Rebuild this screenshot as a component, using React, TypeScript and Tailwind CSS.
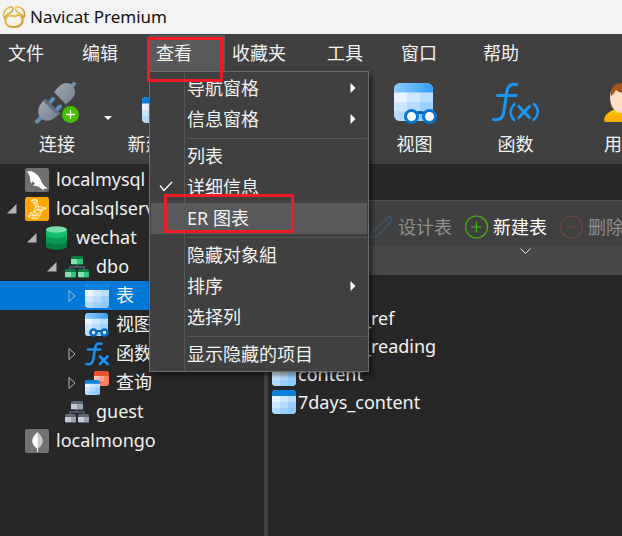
import React, { useState } from "react";

type IconName =
  | "mysql"
  | "sqlserver"
  | "database"
  | "schema"
  | "schemaOff"
  | "table"
  | "view"
  | "func"
  | "query"
  | "mongo";

interface TreeNode {
  label: string;
  level: number;
  icon: IconName;
  state?: "open" | "closed";
}

const treeNodes: TreeNode[] = [
  { label: "localmysql", level: 0, icon: "mysql" },
  { label: "localsqlserver", level: 0, icon: "sqlserver", state: "open" },
  { label: "wechat", level: 1, icon: "database", state: "open" },
  { label: "dbo", level: 2, icon: "schema", state: "open" },
  { label: "表", level: 3, icon: "table", state: "closed" },
  { label: "视图", level: 3, icon: "view" },
  { label: "函数", level: 3, icon: "func", state: "closed" },
  { label: "查询", level: 3, icon: "query", state: "closed" },
  { label: "guest", level: 2, icon: "schemaOff" },
  { label: "localmongo", level: 0, icon: "mongo" },
];

const indents = ["pl-0", "pl-5", "pl-10", "pl-15"];

const tables = ["users", "content_ref", "content_reading", "content", "7days_content"];

/* ---------- Icons ---------- */

function AppLogo() {
  return (
    <svg className="w-6 h-6" viewBox="0 0 24 24" fill="none" strokeLinejoin="round">
      <defs>
        <linearGradient id="gold" x1="0" y1="0" x2="1" y2="1">
          <stop offset="0" stopColor="#f0cc58" />
          <stop offset="1" stopColor="#c8952f" />
        </linearGradient>
      </defs>
      <path
        d="M3.500 16.500C3.500 12.500 6 10.500 8.800 10.500C10.500 10.500 11.500 11.500 12.500 11.500C13.500 11.500 14 10 16 10C19 10 21 12.500 20.500 16C20 20 16.500 22 12 22C7 22 3.500 20 3.500 16.500Z"
        stroke="url(#gold)"
        strokeWidth="2.200"
      />
      <path
        d="M2.500 13.500C0.500 10 2 3.500 8.500 2C11 1.800 11.300 3.500 10.500 5.500C9.500 8 4 8.500 2.500 13.500Z"
        stroke="url(#gold)"
        strokeWidth="1.700"
      />
      <path
        d="M21.800 12.500C23.800 9 22 3 16.500 2C13.500 1.600 13 3.500 14 5.500C15.300 8 19.500 8 21.800 12.500Z"
        stroke="url(#gold)"
        strokeWidth="1.700"
      />
    </svg>
  );
}

function ConnectIcon() {
  return (
    <svg className="w-11 h-[42px]" viewBox="0 0 44 42">
      <defs>
        <linearGradient id="plug" x1="0" y1="0" x2="1" y2="1">
          <stop offset="0" stopColor="#a3abb6" />
          <stop offset="1" stopColor="#727d8c" />
        </linearGradient>
      </defs>
      <g stroke="#5d91b8" strokeWidth="4" strokeLinecap="round">
        <path d="M35 6L39 2" />
        <path d="M2 39.500L7 34.500" />
        <path d="M14 21.500L18 17" />
        <path d="M21 28.500L25 24.500" />
      </g>
      <path d="M19 10C24 4 27 1 32 1C37 1.500 40.500 6 40 11C39.500 16 35 18.500 31 22.500Z" fill="url(#plug)" />
      <path d="M9 18C4 23 2 28 4 33C7 39 13 40 17 37.500C20 36 22 34 24 32Z" fill="url(#plug)" />
      <path d="M8 19L10.500 16.500L25.500 31.500L23 33.500Z" fill="#65707f" />
      <circle cx="35.500" cy="32.500" r="8.500" fill="#45bf00" />
      <path d="M35.500 28V37M31 32.500H40" stroke="#fff" strokeWidth="1.300" />
    </svg>
  );
}

// Grid of pale cells under a coloured heading strip
function TableShape({ head = "#0a7fdc", head2 = "#0a7fdc" }: { head?: string; head2?: string }) {
  const id = "h" + head.slice(1);
  return (
    <>
      <defs>
        <linearGradient id={id}>
          <stop offset="0" stopColor={head} />
          <stop offset="1" stopColor={head2} />
        </linearGradient>
        <clipPath id="cell">
          <rect width="24" height="24" rx="4" />
        </clipPath>
      </defs>
      <g clipPath="url(#cell)">
        <rect width="24" height="24" fill="#a9d8ff" />
        <rect width="24" height="7" fill={`url(#${id})`} />
        <rect y="6" width="8" height="6" fill="#e8f4ff" />
        <rect x="8" y="6" width="8" height="6" fill="#cde8ff" />
        <rect x="16" y="6" width="8" height="6" fill="#b9deff" />
        <rect y="12" width="8" height="6" fill="#cbe6ff" />
        <rect x="8" y="12" width="8" height="6" fill="#b7dcff" />
        <rect x="16" y="12" width="8" height="6" fill="#99d0ff" />
        <rect y="18" width="8" height="6" fill="#b2dbff" />
        <rect x="8" y="18" width="8" height="6" fill="#9bd0ff" />
        <rect x="16" y="18" width="8" height="6" fill="#8bc9ff" />
      </g>
    </>
  );
}

function ViewIcon() {
  return (
    <svg className="w-11 h-[42px]" viewBox="0 0 44 42">
      <svg x="1" y="1" width="39" height="38" viewBox="0 0 24 24" preserveAspectRatio="none">
        <TableShape head="#8fcbff" head2="#369df5" />
      </svg>
      <path d="M20 32Q27 29 34 32" stroke="#0d5fae" strokeWidth="3" fill="none" />
      <circle cx="18.500" cy="34.500" r="6" fill="#fff" stroke="#0a75cf" strokeWidth="3" />
      <circle cx="36.500" cy="34.500" r="6" fill="#fff" stroke="#0a75cf" strokeWidth="3" />
    </svg>
  );
}

function FunctionIcon() {
  return (
    <svg className="w-12 h-[42px]" viewBox="0 0 48 42" fill="none" stroke="#1b96f5" strokeWidth="3" strokeLinecap="round">
      <path d="M24.500 2.500C17 1.500 15.500 5 14.500 12L12 29C11 36 8.500 38.500 1.500 37.500" />
      <path d="M5.500 13.500H24" />
      <path d="M22.500 22C17.500 27 17.500 33 22 38" strokeWidth="2.400" />
      <path d="M42 22C47.500 27 47 33 41.500 38" strokeWidth="2.400" />
      <path d="M27 24.500L37.500 35.500M37.500 24.500L27 35.500" />
    </svg>
  );
}

function QueryLargeIcon() {
  return (
    <svg className="w-11 h-[42px]" viewBox="0 0 44 42">
      <rect x="17" y="1" width="26" height="25" rx="4" fill="#f4633f" />
      <svg x="0" y="15" width="26" height="26" viewBox="0 0 24 24">
        <TableShape />
      </svg>
    </svg>
  );
}

function TableLargeIcon() {
  return (
    <svg className="w-[42px] h-[42px]" viewBox="0 0 24 24">
      <TableShape />
    </svg>
  );
}

function UserIcon() {
  return (
    <svg className="w-9 h-[42px]" viewBox="0 0 36 42">
      <defs>
        <linearGradient id="shirt" x1="0" y1="0" x2="0" y2="1">
          <stop offset="0" stopColor="#ffc900" />
          <stop offset="1" stopColor="#f7a800" />
        </linearGradient>
      </defs>
      <path d="M0 38C1 31 7 29 12 27L24 27C30 29 35 31 36 38Q36 40 34 40H2Q0 40 0 38Z" fill="url(#shirt)" />
      <path d="M6 15C6 7 11 3 18 3S30 7 30 15C30 25 25 31 18 31S6 25 6 15Z" fill="#ffe1c8" />
      <path d="M7 14C6 5 11 1 18 1S30 5 29 14L27 11Q18 13 12 8Q10 12 7 14Z" fill="#a5561f" />
    </svg>
  );
}

function TreeIcon({ name }: { name: IconName }) {
  const cls = "w-6 h-6 shrink-0";
  switch (name) {
    case "mysql":
      return (
        <svg className={cls} viewBox="0 0 24 24">
          <rect width="24" height="24" rx="2" fill="#6f6f6f" />
          <path d="M2 3.500C5 2 8 3.500 10.500 5.500C13.500 7 15.500 11 16.500 14C18 17 20.500 18.500 22.500 21L18.500 20.500L18.500 23C16.500 20 14 19 11.500 18L8 17.500L10 15.500C8 13.500 7.500 12 6.500 15.500C4.500 13 5.500 10 4.500 8C3.500 6 3 5 2 3.500Z" fill="#fff" />
        </svg>
      );
    case "sqlserver":
      return (
        <svg className={cls} viewBox="0 0 24 24">
          <rect width="24" height="24" rx="2" fill="#ffa500" />
          <g fill="none" stroke="#fff2d2" strokeWidth="0.900" strokeLinejoin="round">
            <path d="M6 3.500L11 2L12.500 4L12 7L14 9.500L21.500 11L17 13.500L14.500 19L12 22L7 21.500L3 19L5 16L9 14.500L10.500 10L8.500 6Z" />
            <path d="M6 3.500L12.500 4L8.500 6L12 7L10.500 10L14 9.500L13 13L21.500 11M10.500 10L13 13L17 13.500L12.500 17L9 14.500L13 13M12.500 17L14.500 19L9 18.500L12 22M9 14.500L9 18.500L5 16M9 18.500L3 19M9 18.500L7 21.500M12.500 17L9 18.500" />
          </g>
        </svg>
      );
    case "database":
      return (
        <svg className={cls} viewBox="0 0 24 24">
          <path d="M1 4V20C1 25 22 25 22 20V4Z" fill="#067f43" />
          <path d="M1 4V15C1 19 22 19 22 15V4Z" fill="#0a9c54" />
          <path d="M1 4V9C1 13 22 13 22 9V4Z" fill="#12bd6b" />
          <ellipse cx="11.500" cy="3.500" rx="10.500" ry="3.200" fill="#78dfa8" />
        </svg>
      );
    case "schema":
    case "schemaOff": {
      const on = name === "schema";
      const dark = on ? "#0c7a42" : "#5f6874";
      const mid = on ? "#34c27d" : "#99a3b0";
      const light = on ? "#82e0b0" : "#c5cbd3";
      return (
        <svg className={cls} viewBox="0 0 24 24">
          <path d="M12 9V12M5 15V12H19V15" stroke="#566176" strokeWidth="1.600" fill="none" />
          {[[6, 1], [0, 14], [13, 14]].map(([x, y]) => (
            <g key={x}>
              <rect x={x} y={y} width={x === 6 ? 12 : 11} height="9" rx="1.500" fill={dark} />
              <rect x={x} y={y + 3} width="6" height="5" fill={light} />
              <rect x={x + 6} y={y + 3} width={x === 6 ? 6 : 5} height="5" fill={mid} />
            </g>
          ))}
        </svg>
      );
    }
    case "table":
      return (
        <svg className={cls} viewBox="0 0 24 24">
          <TableShape />
        </svg>
      );
    case "view":
      return (
        <svg className={cls} viewBox="0 0 24 24">
          <svg width="23" height="23" viewBox="0 0 24 24">
            <TableShape head="#8fcbff" head2="#369df5" />
          </svg>
          <path d="M8 18H20" stroke="#0d5fae" strokeWidth="2" />
          <circle cx="8.500" cy="19.500" r="3" fill="#fff" stroke="#0a6cc4" strokeWidth="2.600" />
          <circle cx="19.500" cy="19.500" r="3" fill="#fff" stroke="#0a6cc4" strokeWidth="2.600" />
        </svg>
      );
    case "func":
      return (
        <svg className={cls} viewBox="0 0 24 24" fill="none" stroke="#1b90f0" strokeWidth="2.600" strokeLinecap="round">
          <path d="M16.500 1.800C12 0.800 10.500 3 10 6.500L8.500 16.500C7.500 21.500 5.500 23 1.500 22" />
          <path d="M3 7.500H15" />
          <path d="M15 14.500L22.500 22M22.500 14.500L15 22" />
        </svg>
      );
    case "query":
      return (
        <svg className={cls} viewBox="0 0 24 24">
          <rect x="9" y="0" width="15" height="15" rx="3" fill="#ff8262" />
          <path d="M9 5V3Q9 0 12 0H21Q24 0 24 3V5Z" fill="#e5532f" />
          <rect x="9" y="5" width="5" height="5" fill="#ffc4b3" />
          <rect x="14" y="5" width="5" height="5" fill="#ffa58c" />
          <svg x="0" y="9" width="15" height="15" viewBox="0 0 24 24">
            <TableShape />
          </svg>
        </svg>
      );
    case "mongo":
      return (
        <svg className={cls} viewBox="0 0 24 24">
          <rect width="24" height="24" rx="2" fill="#727272" />
          <path d="M12.500 3C7 8 4 14 12.500 20Z" fill="#fff" />
          <path d="M12.500 3C18 8 21 14 12.500 20Z" fill="#c9c9c9" />
          <path d="M12.500 4V23" stroke="#eee" strokeWidth="1" />
        </svg>
      );
  }
}

function Disclosure({ state }: { state?: "open" | "closed" }) {
  return (
    <span className="w-[25px] shrink-0 flex justify-center pr-0.5">
      {state === "open" && (
        <svg className="w-[10px] h-[10px]" viewBox="0 0 10 10">
          <path d="M9.500 0V9.500H0Z" fill="#b4b4b4" />
        </svg>
      )}
      {state === "closed" && (
        <svg className="w-2 h-[14px]" viewBox="0 0 8 14">
          <path d="M1 1.500L7 7L1 12.500Z" fill="none" stroke="#b4b4b4" />
        </svg>
      )}
    </span>
  );
}

/* ---------- View menu ---------- */

interface MenuItem {
  label: string;
  submenu?: boolean;
  checked?: boolean;
  active?: boolean;
}

const menuGroups: MenuItem[][] = [
  [
    { label: "导航窗格", submenu: true },
    { label: "信息窗格", submenu: true },
  ],
  [{ label: "列表" }, { label: "详细信息", checked: true }, { label: "ER 图表", active: true }],
  [{ label: "隐藏对象組" }, { label: "排序", submenu: true }, { label: "选择列" }],
  [{ label: "显示隐藏的项目" }],
];

function ViewMenu() {
  return (
    <div
      role="menu"
      className="absolute left-0 top-[36px] z-10 w-[220px] border border-[#6e6e6e] bg-[#404040] p-px shadow-[3px_3px_5px_rgba(0,0,0,0.5)]"
    >
      <div className="absolute inset-y-px left-[34px] w-px bg-[#565656]" />
      {menuGroups.map((group, i) => (
        <div key={i}>
          {i > 0 && (
            <div className="ml-9 flex h-1.5 items-center">
              <div className="h-px w-full bg-[#565656]" />
            </div>
          )}
          {group.map((item) => (
            <button
              key={item.label}
              role="menuitem"
              className={
                item.active
                  ? "relative flex h-[31px] w-full items-center bg-[#595959] pb-0.5 text-left"
                  : "relative flex h-[31px] w-full items-center pb-0.5 text-left"
              }
            >
              <span className="w-9 shrink-0 pl-2">
                {item.checked && (
                  <svg className="w-[14px] h-[11px]" viewBox="0 0 14 11">
                    <path d="M1 4.500L5 9.500L13 1" fill="none" stroke="#fff" strokeWidth="1.300" />
                  </svg>
                )}
              </span>
              <span className="flex-1 whitespace-nowrap">{item.label}</span>
              {item.submenu && (
                <svg className="mr-[11px] w-[6px] h-[10px]" viewBox="0 0 6 10">
                  <path d="M0.500 0L5.500 5L0.500 10Z" fill="#fff" />
                </svg>
              )}
              {item.active && (
                <span className="absolute left-[13px] top-[-9px] z-10 h-[39px] w-[130px] border-3 border-[#ee1c25]" />
              )}
            </button>
          ))}
        </div>
      ))}
    </div>
  );
}

const menuBar = [
  { label: "文件", width: "w-[74px]" },
  { label: "编辑", width: "w-[74px]" },
  { label: "查看", width: "w-[76px]" },
  { label: "收藏夹", width: "w-[95px]" },
  { label: "工具", width: "w-[74px]" },
  { label: "窗口", width: "w-[82px]" },
  { label: "帮助", width: "w-[74px]" },
];

const toolButtons = [
  { label: "连接", icon: <ConnectIcon />, cls: "w-[114px]", drop: true },
  { label: "新建查询", icon: <QueryLargeIcon />, cls: "w-[99px] mr-[50px]" },
  { label: "表", icon: <TableLargeIcon />, cls: "w-[101px]" },
  { label: "视图", icon: <ViewIcon />, cls: "w-[101px]" },
  { label: "函数", icon: <FunctionIcon />, cls: "w-[101px]" },
  { label: "用户", icon: <UserIcon />, cls: "w-[112px]" },
];

export default function App() {
  const [selected, setSelected] = useState(4);

  return (
    <div className="flex min-h-screen flex-col overflow-hidden bg-[#272727] font-['Noto_Sans','Noto_Sans_CJK_SC',sans-serif] text-[18px] leading-6 text-[#f2f2f2]">
      {/* Title bar */}
      <header className="flex h-[34px] items-center gap-1 bg-[#f3f3f3] pl-0.5 text-[17px] text-[#111]">
        <AppLogo />
        <h1>Navicat Premium</h1>
      </header>

      {/* Menu bar */}
      <nav className="flex h-[38px] bg-[#404040] pl-px pt-px">
        {menuBar.map((m) => (
          <div key={m.label} className={"relative shrink-0 " + m.width}>
            <button
              className={
                m.label === "查看"
                  ? "h-9 w-full bg-[#595959] px-[7px] text-left"
                  : "h-9 w-full px-[7px] text-left"
              }
            >
              {m.label}
            </button>
            {m.label === "查看" && (
              <>
                <ViewMenu />
                <span className="absolute left-[-2px] top-[2px] z-20 h-[45px] w-[76px] border-3 border-[#ee1c25]" />
              </>
            )}
          </div>
        ))}
      </nav>

      {/* Main toolbar */}
      <div className="flex overflow-hidden bg-[#404040]">
        {toolButtons.map((b) => (
          <button
            key={b.label}
            className={"relative flex shrink-0 flex-col items-center gap-2 pt-2.5 pb-2 " + b.cls}
          >
            {b.icon}
            <span className="whitespace-nowrap">{b.label}</span>
            {b.drop && (
              <svg className="absolute left-[104px] top-11 w-2 h-1" viewBox="0 0 8 4">
                <path d="M0 0H8L4 4Z" fill="#fff" />
              </svg>
            )}
          </button>
        ))}
      </div>

      <div className="flex flex-1">
        {/* Connection tree */}
        <aside className="w-[264px] shrink-0 pt-px">
          {treeNodes.map((node, i) => (
            <button
              key={node.label}
              onClick={() => setSelected(i)}
              className={
                (selected === i ? "bg-[#0078d7] " : "") +
                "flex h-[29px] w-full items-center text-left " +
                indents[node.level]
              }
            >
              <Disclosure state={node.state} />
              <TreeIcon name={node.icon} />
              <span className="pb-0.5 pl-[7px] whitespace-nowrap">{node.label}</span>
            </button>
          ))}
        </aside>
        <div className="w-1 shrink-0 bg-[#404040]" />

        {/* Object pane */}
        <main className="min-w-0 flex-1">
          <div className="h-[37px] border-b border-[#505050]" />
          <div className="flex h-[45px] items-center gap-[13px] overflow-hidden bg-[#404040] pl-[7px] pt-1.5 *:flex *:shrink-0 *:items-center *:gap-1 *:whitespace-nowrap">
            <button className="text-[#8f8f8f]">
              <TreeIcon name="table" />
              打开表
            </button>
            <button className="text-[#8f8f8f]">
              <svg className="w-6 h-6" viewBox="0 0 24 24" fill="none" stroke="#3c5468" strokeWidth="1.200">
                <path d="M1 23L2.500 17L17 2.500Q19 0.500 21 2.500Q23.500 4.500 21.500 6.500L7 21Z M15.500 4L20 8.500M18 1.500L22.500 6" />
              </svg>
              设计表
            </button>
            <button className="text-white">
              <svg className="w-6 h-6" viewBox="0 0 24 24" fill="none" stroke="#43b80c" strokeWidth="1.200">
                <circle cx="11.500" cy="12" r="11" />
                <path d="M11.500 6.500V17.500M6 12H17" />
              </svg>
              新建表
            </button>
            <button className="text-[#8f8f8f]">
              <svg className="w-6 h-6" viewBox="0 0 24 24" fill="none" stroke="#6b4540" strokeWidth="1.200">
                <circle cx="11.500" cy="12" r="11" />
                <path d="M6 12H17" />
              </svg>
              删除表
            </button>
          </div>
          <div className="h-[29px] bg-[#484848] pl-[252px] pt-0.5">
            <svg className="w-[11px] h-[6px]" viewBox="0 0 11 6">
              <path d="M0.500 0.500L5.500 5.500L10.500 0.500" fill="none" stroke="#e8e8e8" />
            </svg>
          </div>
          <ul className="pl-1 pt-px">
            {tables.map((t) => (
              <li key={t} className="flex h-7 items-center gap-0.5">
                <TreeIcon name="table" />
                {t}
              </li>
            ))}
          </ul>
        </main>
      </div>
    </div>
  );
}
